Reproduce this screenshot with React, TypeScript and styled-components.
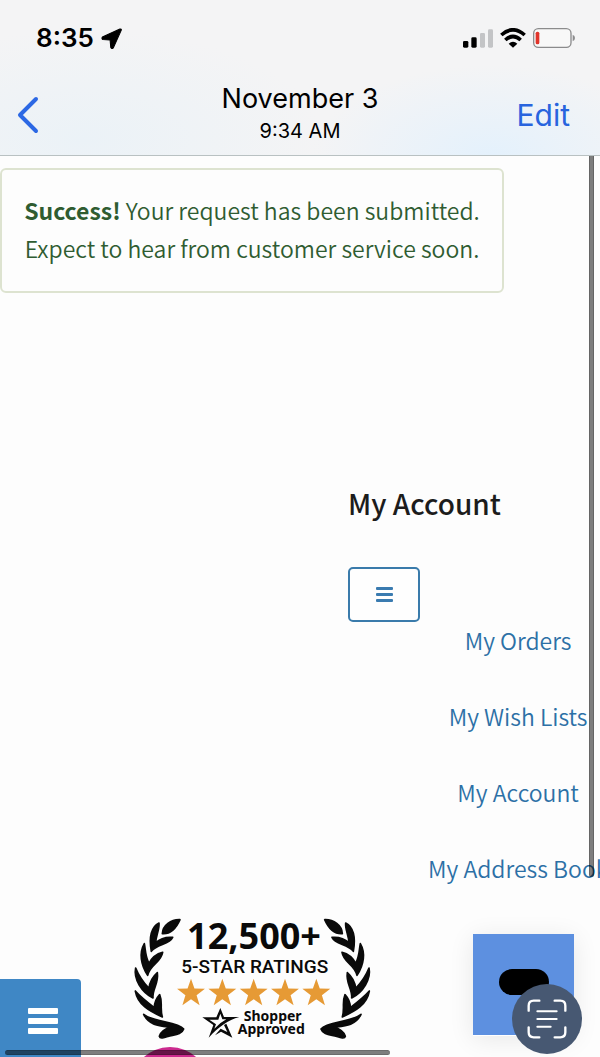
import React from "react";
import styled, { createGlobalStyle } from "styled-components";

const GlobalStyle = createGlobalStyle`
  * { box-sizing: border-box; }
  body {
    margin: 0;
    background: #fdfdfd;
    font-family: "Noto Sans CJK SC", "Noto Sans", sans-serif;
  }
`;

const Page = styled.div`
  position: relative;
  display: flex;
  flex-direction: column;
  min-height: 100vh;
  overflow: hidden;
`;

const Header = styled.header`
  border-bottom: 1px solid #b9c1c2;
  background:
    radial-gradient(ellipse 180px 90px at 82% 100%, #e4f1fc, transparent),
    radial-gradient(ellipse 240px 110px at 14% 90%, #ebf2f7, transparent),
    #f4f4f5;
  font-family: Inter, "Liberation Sans", sans-serif;
  color: #000;
`;

const StatusBar = styled.div`
  display: flex;
  align-items: center;
  justify-content: space-between;
  height: 76px;
  padding: 0 25px 0 36px;
`;

const StatusGroup = styled.div<{ $gap: number }>`
  display: flex;
  align-items: center;
  gap: ${(p) => p.$gap}px;
`;

const Clock = styled.time`
  font-size: 26px;
  font-weight: 600;
  line-height: 32px;
`;

const NavBar = styled.nav`
  display: grid;
  grid-template-columns: 1fr auto 1fr;
  align-items: center;
  height: 79px;
  padding: 0 30px 2px 16px;
`;

const TextButton = styled.button<{ $end?: boolean }>`
  justify-self: ${(p) => (p.$end ? "end" : "start")};
  display: flex;
  padding: 0;
  border: 0;
  background: none;
  color: #2864de;
  font-family: inherit;
  font-size: 30px;
  line-height: 36px;
`;

const TitleBlock = styled.div`
  text-align: center;
  padding: 0 0 4px 14px;
`;

const Title = styled.h1`
  margin: 0;
  font-size: 27px;
  font-weight: 400;
  line-height: 36px;
`;

const Subtitle = styled.p`
  margin: 0;
  font-size: 20px;
  line-height: 28px;
`;

const Main = styled.main`
  flex: 1;
`;

const Alert = styled.div`
  width: 84%;
  margin-top: 12px;
  padding: 21px 0 24px;
  border: 2px solid #dde3d0;
  border-radius: 6px;
  color: #2f5c31;
  font-size: 23px;
  font-weight: 350;
  line-height: 38px;
  text-align: center;
  white-space: nowrap;
`;

const Account = styled.section`
  margin: 191px 0 0 58%;
`;

const AccountTitle = styled.h2`
  margin: 0 0 45px;
  color: #1c1c1c;
  font-size: 28px;
  font-weight: 500;
  line-height: 38px;
`;

const OutlineButton = styled.button`
  display: flex;
  align-items: center;
  justify-content: center;
  width: 72px;
  height: 55px;
  padding: 0;
  border: 2px solid #3a7bab;
  border-radius: 5px;
  background: #fefefe;
`;

const LinkList = styled.ul`
  display: flex;
  flex-direction: column;
  align-items: center;
  gap: 40px;
  margin: 0 0 0 35%;
  padding: 0;
  list-style: none;
`;

const AccountLink = styled.a`
  display: block;
  color: #2c70a6;
  font-size: 23px;
  font-weight: 350;
  line-height: 36px;
  text-decoration: none;
  white-space: nowrap;
`;

const Footer = styled.footer`
  display: flex;
  align-items: flex-end;
  margin-top: 24px;
`;

const MenuButton = styled.button`
  display: flex;
  align-items: center;
  justify-content: center;
  width: 81px;
  height: 78px;
  margin-right: 39px;
  padding: 6px 0 0 4px;
  border: 0;
  border-radius: 0 4px 0 0;
  background: #3f87c5;
`;

const Bars = styled.span<{ $large?: boolean }>`
  display: grid;
  gap: ${(p) => (p.$large ? 4 : 3)}px;
  width: ${(p) => (p.$large ? 30 : 17)}px;

  &::before, &::after, & > i {
    content: "";
    height: ${(p) => (p.$large ? 6 : 3)}px;
    border-radius: 1px;
    background: ${(p) => (p.$large ? "#fff" : "#3a7bb0")};
  }
`;

const ChatTile = styled.div`
  position: relative;
  align-self: flex-start;
  display: flex;
  align-items: center;
  justify-content: center;
  width: 101px;
  height: 101px;
  margin: 24px 26px 0 auto;
  background: #5d90e0;
  box-shadow: 0 1px 0 #fff, 0 4px 24px rgba(0, 0, 0, 0.09);
`;

const ChatPill = styled.span`
  width: 50px;
  height: 26px;
  margin-bottom: 5px;
  border-radius: 13px;
  background: #000;
`;

const ScanButton = styled.button`
  position: absolute;
  right: -8px;
  bottom: -19px;
  display: flex;
  align-items: center;
  justify-content: center;
  width: 70px;
  height: 70px;
  padding: 0;
  border: 0;
  border-radius: 50%;
  background: #475872;
`;

const PinkBubble = styled.span`
  position: absolute;
  left: 131px;
  bottom: -68px;
  width: 78px;
  height: 78px;
  border-radius: 50%;
  background: #cb2a8e;
`;

const VerticalThumb = styled.span`
  position: absolute;
  top: 156px;
  right: 6px;
  bottom: 180px;
  width: 5px;
  border: solid rgba(0, 0, 0, 0.2);
  border-width: 0 1px;
  border-radius: 0 0 3px 3px;
  background: rgba(0, 0, 0, 0.5);
`;

const HorizontalThumb = styled.span`
  position: absolute;
  left: 5px;
  right: 35%;
  bottom: 2px;
  height: 5px;
  border: solid rgba(0, 0, 0, 0.15);
  border-width: 1px 0;
  border-radius: 3px;
  background: rgba(0, 0, 0, 0.5);
`;

const MenuBars = ({ large }: { large?: boolean }) => (
  <Bars $large={large} aria-hidden="true">
    <i />
  </Bars>
);

const LocationIcon = () => (
  <svg width="21" height="21" viewBox="0 0 60 60" aria-hidden="true">
    <path
      d="M54 3 L4 26 Q1 30 5 33 L26 34 L28 56 Q31 61 35 57 L58 6 Q59 2 54 3 Z"
      fill="#000"
      stroke="#000"
      strokeWidth="3"
      strokeLinejoin="round"
    />
  </svg>
);

const SignalIcon = () => (
  <svg width="30" height="19" viewBox="0 0 90 57" aria-hidden="true">
    <rect x="0" y="36" width="16" height="20" rx="4" />
    <rect x="25" y="25" width="16" height="31" rx="4" />
    <rect x="51" y="12" width="15" height="44" rx="4" fill="#c3c4c6" />
    <rect x="75" y="1" width="15" height="55" rx="4" fill="#c3c4c6" />
  </svg>
);

const WifiIcon = () => (
  <svg width="26" height="20" viewBox="0 0 78 60" aria-hidden="true">
    <g fill="none" stroke="#000" strokeWidth="11">
      <path d="M4 21 Q39 -10 74 21" />
      <path d="M16 36 Q39 15 62 36" />
    </g>
    <path d="M26 47 Q39 36 52 47 L39 59 Z" />
  </svg>
);

const BatteryIcon = () => (
  <svg width="42" height="20" viewBox="0 0 126 60" aria-hidden="true">
    <rect x="2" y="2" width="112" height="56" rx="14" fill="#f8f8f8" stroke="#8b8b8c" strokeWidth="4" />
    <path d="M119 20 Q126 23 126 30 Q126 37 119 40 Z" fill="#8b8b8c" />
    <rect x="8" y="11" width="11" height="38" rx="5" fill="#e0352b" />
  </svg>
);

const BackIcon = () => (
  <svg width="24" height="38" viewBox="0 0 24 38" aria-hidden="true">
    <path d="M20 3 L4 19 L20 35" fill="none" stroke="#2c68e4" strokeWidth="4" strokeLinecap="round" strokeLinejoin="round" />
  </svg>
);

const ScanIcon = () => (
  <svg width="40" height="40" viewBox="0 0 120 120" fill="none" stroke="#fff" strokeWidth="7" strokeLinecap="round" aria-hidden="true">
    <path d="M5 35 V20 Q5 5 20 5 H37 M83 5 H100 Q115 5 115 20 V35 M115 85 V100 Q115 115 100 115 H83 M37 115 H20 Q5 115 5 100 V85" />
    <path d="M31 37 H89 M31 60 H89 M31 83 H71" strokeWidth="6" />
  </svg>
);

const laurelLeaves = [
  "M180 29 C153 28 128 46 127 71 C153 73 168 56 180 29 Z",
  "M117 39 C94 50 86 82 94 124 C112 102 148 104 158 82 C136 80 118 88 107 98 C108 76 119 58 117 39 Z",
  "M73 101 C57 128 62 164 83 196 C91 161 122 160 128 127 C108 132 94 146 87 160 C75 138 77 120 73 101 Z",
  "M47 174 C40 207 65 247 99 264 C96 236 117 222 112 188 C97 201 89 216 87 235 C65 212 55 194 47 174 Z",
  "M46 243 C53 284 88 303 127 321 C119 294 129 278 119 254 C107 267 103 281 103 293 C80 275 61 260 46 243 Z",
  "M71 313 C87 347 121 348 152 352 C137 356 123 362 118 379 C120 388 133 383 144 379 C162 374 185 375 191 357 C173 335 100 337 71 313 Z",
];

const starPoints = (cx: number, cy: number, r: number) =>
  Array.from({ length: 10 }, (_, i) => {
    const radius = i % 2 ? r * 0.4 : r;
    const angle = (Math.PI * i) / 5 - Math.PI / 2;
    return `${cx + radius * Math.cos(angle)},${cy + radius * Math.sin(angle)}`;
  }).join(" ");

const Laurel = () => (
  <g stroke="#0a0a0a" strokeWidth="5" strokeLinejoin="round">
    {laurelLeaves.map((d) => (
      <path key={d} d={d} />
    ))}
  </g>
);

const RatingBadge = () => (
  <svg width="260" height="147" viewBox="0 0 780 441" fill="#0a0a0a" role="img" aria-label="12,500+ 5-star ratings, Shopper Approved">
    <Laurel />
    <g transform="translate(794 0) scale(-1 1)">
      <Laurel />
    </g>
    <text x="402" y="116" textAnchor="middle" fontFamily="Noto Sans, sans-serif" fontWeight="700" fontSize="108">12,500+</text>
    <text x="404" y="189" textAnchor="middle" fontFamily="Roboto, sans-serif" fontWeight="500" fontSize="57">5-STAR RATINGS</text>
    {[213, 307, 401, 495, 589].map((x) => (
      <polygon key={x} points={starPoints(x, 250, 44)} fill="#e69a35" />
    ))}
    <path d="M301 294 L312 321 H358 C324 330 296 351 266 383 L280 345 L247 322 H289 Z M301 311 L295 329 H268 L288 343 L283 356 Q300 338 319 328 H307 Z" fillRule="evenodd" />
    <path d="M319 341 L337 383 L303 365 L285 376 L302 356 L322 366 L312 345 Z" />
    <g fontFamily="Noto Sans, sans-serif" fontWeight="700" fontSize="42" textAnchor="middle">
      <text x="458" y="334">Shopper</text>
      <text x="454" y="373">Approved</text>
    </g>
  </svg>
);

const accountLinks = ["My Orders", "My Wish Lists", "My Account", "My Address Book"];

export default function App() {
  return (
    <Page>
      <GlobalStyle />
      <Header>
        <StatusBar>
          <StatusGroup $gap={7}>
            <Clock>8:35</Clock>
            <LocationIcon />
          </StatusGroup>
          <StatusGroup $gap={7}>
            <SignalIcon />
            <WifiIcon />
            <BatteryIcon />
          </StatusGroup>
        </StatusBar>
        <NavBar>
          <TextButton aria-label="Back">
            <BackIcon />
          </TextButton>
          <TitleBlock>
            <Title>November 3</Title>
            <Subtitle>9:34 AM</Subtitle>
          </TitleBlock>
          <TextButton $end>Edit</TextButton>
        </NavBar>
      </Header>
      <Main>
        <Alert role="status">
          <strong>Success!</strong> Your request has been submitted.
          <br />
          Expect to hear from customer service soon.
        </Alert>
        <Account>
          <AccountTitle>My Account</AccountTitle>
          <OutlineButton aria-label="Account menu">
            <MenuBars />
          </OutlineButton>
          <LinkList>
            {accountLinks.map((label) => (
              <li key={label}>
                <AccountLink href="#">{label}</AccountLink>
              </li>
            ))}
          </LinkList>
        </Account>
      </Main>
      <Footer>
        <MenuButton aria-label="Menu">
          <MenuBars large />
        </MenuButton>
        <RatingBadge />
        <ChatTile>
          <ChatPill />
          <ScanButton aria-label="Scan text">
            <ScanIcon />
          </ScanButton>
        </ChatTile>
      </Footer>
      <PinkBubble />
      <VerticalThumb />
      <HorizontalThumb />
    </Page>
  );
}
